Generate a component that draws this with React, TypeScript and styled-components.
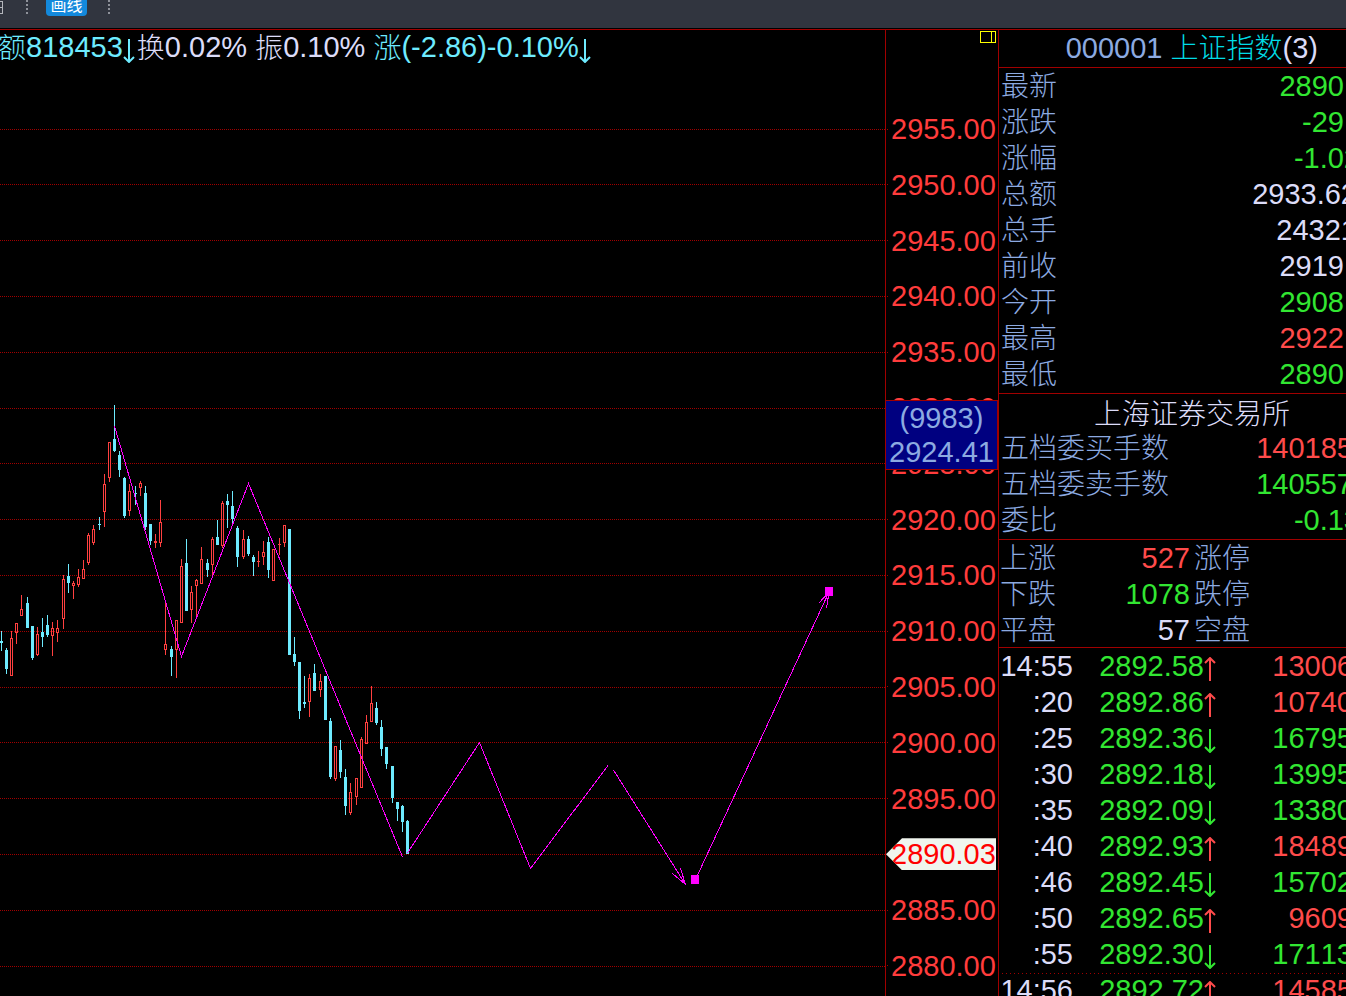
import React from "react";
import styled, { createGlobalStyle } from "styled-components";

const GlobalStyle = createGlobalStyle`
  * { box-sizing: border-box; }
  body {
    margin: 0;
    background: #000;
    color: #dcdcf8;
    font-family: "Liberation Sans", "Noto Sans CJK SC", sans-serif;
    font-size: 29px;
    font-kerning: none;
    line-height: 36px;
    overflow: hidden;
  }
`;

const tones = {
  up: "#ff4b4b",
  down: "#32e632",
  plain: "#dcdcf8",
  label: "#8caae1",
  cyan: "#6eebff",
  teal: "#00dce6",
};
type Tone = keyof typeof tones;

const MAGENTA = "#ff00ff";
const FRAME = "#a00000";

const Screen = styled.div`
  display: flex;
  flex-direction: column;
  height: 100vh;
  overflow: hidden;
`;

const Toolbar = styled.header`
  display: flex;
  flex: none;
  align-items: flex-start;
  height: 28px;
  background: #31353f;
  overflow: hidden;
`;

const ToolbarIcon = styled.svg`
  display: block;
  flex: none;
`;

const Separator = styled.span`
  flex: none;
  width: 2px;
  height: 14px;
  margin: 0 18px 0 21px;
  background: repeating-linear-gradient(to top, #8f929a 0 2px, transparent 2px 4px);
`;

const DrawButton = styled.button`
  flex: none;
  width: 41px;
  height: 26px;
  margin-top: -10px;
  padding: 0;
  border: 0;
  border-radius: 4px;
  background: #1389dc;
  color: #fff;
  font-family: "Noto Sans CJK SC", sans-serif;
  font-size: 16px;
  line-height: 28px;
  overflow: hidden;
`;

const Workspace = styled.main`
  display: flex;
  flex: 1;
  min-height: 0;
  margin-top: 1px;
  border-top: 1px solid ${FRAME};
`;

const ChartPane = styled.section`
  display: flex;
  flex-direction: column;
  flex: 1;
  min-width: 0;
  border-right: 1px solid ${FRAME};
`;

const InfoLine = styled.div`
  display: flex;
  flex: none;
  height: 36px;
  margin-left: -2px;
  line-height: 34px;
  white-space: pre;
`;

const Text = styled.span<{ $tone: Tone }>`
  color: ${(p) => tones[p.$tone]};
`;

const Han = styled.span<{ $tone?: Tone }>`
  color: ${(p) => (p.$tone ? tones[p.$tone] : "inherit")};
  font-family: "Noto Sans CJK SC", sans-serif;
  font-size: 28px;
  font-weight: 300;
  line-height: 32px;
`;

const ArrowMark = styled.svg<{ $tone: Tone }>`
  display: inline-block;
  flex: none;
  width: 12px;
  height: 24px;
  margin-top: 9px;
  fill: none;
  stroke: ${(p) => tones[p.$tone]};
  stroke-width: 2px;
  vertical-align: top;
`;

const InfoArrow = styled(ArrowMark)`
  margin-right: 2px;
`;

const Plot = styled.svg`
  display: block;
  flex: 1;
  width: 100%;
  min-height: 0;
`;

const Axis = styled.aside`
  position: relative;
  flex: none;
  width: 112px;
  padding-top: 84px;
`;

const PaneToggle = styled.button`
  position: absolute;
  top: 1px;
  right: 2px;
  display: block;
  width: 16px;
  height: 12px;
  padding: 0;
  border: 1px solid #ffff00;
  background: linear-gradient(to left, transparent 3px, #ffff00 3px 4px, transparent 4px);
`;

const Scale = styled.ol`
  display: flex;
  flex-direction: column;
  justify-content: space-between;
  height: 867px;
  margin: 0;
  padding: 0;
  list-style: none;
`;

const Level = styled.li`
  display: flex;
  align-items: center;
  height: 30px;
  color: #ff3c3c;
  line-height: 30px;

  &::before {
    content: "";
    width: 3px;
    height: 1px;
    margin-right: 2px;
    background: repeating-linear-gradient(to right, transparent 0 1px, ${FRAME} 1px 2px);
  }
`;

const LastPrice = styled.li`
  height: 32px;
  margin: -1px 2px -1px 0;
  padding-left: 5px;
  background: #f0f5ee;
  clip-path: polygon(0 50%, 16px 0, 100% 0, 100% 100%, 16px 100%);
  color: #ff0000;
  line-height: 32px;
`;

const Crosshair = styled.div`
  position: absolute;
  top: 370px;
  left: 0;
  width: 112px;
  height: 70px;
  border: 1px solid ${FRAME};
  border-left: 0;
  background: #000080;
  color: #8caae1;
  line-height: 34px;
  text-align: center;
`;

const Quote = styled.aside`
  flex: none;
  width: 348px;
  border-left: 1px solid ${FRAME};
  overflow: hidden;
`;

const QuoteTitle = styled.h1`
  display: flex;
  justify-content: flex-end;
  height: 38px;
  margin: 0;
  padding-right: 28px;
  border-bottom: 1px solid ${FRAME};
  font-size: 29px;
  font-weight: 400;
  white-space: pre;
`;

const Exchange = styled.h2`
  display: flex;
  align-items: center;
  justify-content: center;
  height: 36px;
  margin: 0;
  padding-left: 39px;
`;

const Group = styled.section`
  padding-bottom: 1px;
  border-bottom: 1px solid ${FRAME};
`;

const Row = styled.div`
  display: flex;
  justify-content: space-between;
  height: 36px;
  padding: 0 2px;
  white-space: nowrap;
`;

const Value = styled.span<{ $tone: Tone; $spill: number }>`
  margin-right: -${(p) => p.$spill}px;
  color: ${(p) => tones[p.$tone]};
`;

const Breadth = styled.div`
  display: grid;
  grid-template-columns: 60px 131px 1fr;
  height: 36px;
  padding-left: 1px;
`;

const Count = styled.span<{ $tone: Tone }>`
  padding-right: 1px;
  color: ${(p) => tones[p.$tone]};
  text-align: right;
`;

const BreadthLabel = styled(Han)`
  padding-left: 3px;
`;

const BreadthList = styled.section`
  height: 108px;
  border-bottom: 1px solid ${FRAME};
`;

const Ticks = styled.table`
  width: 100%;
  border-collapse: collapse;
  table-layout: fixed;
`;

const TickRow = styled.tr<{ $minute: boolean }>`
  height: 36px;
  background: ${(p) =>
    p.$minute
      ? `repeating-linear-gradient(to right, transparent 0 3px, ${FRAME} 3px 4px) 0 1px / 100% 1px no-repeat`
      : "none"};
`;

const Cell = styled.td<{ $tone: Tone; $width?: number }>`
  width: ${(p) => (p.$width ? `${p.$width}px` : "auto")};
  height: 36px;
  padding: 0;
  color: ${(p) => tones[p.$tone]};
  text-align: right;
  vertical-align: top;
  white-space: nowrap;
`;

const Volume = styled.span`
  margin-right: -7px;
`;

const levels = [
  "2955.00", "2950.00", "2945.00", "2940.00", "2935.00", "2930.00", "2925.00", "2920.00",
  "2915.00", "2910.00", "2905.00", "2900.00", "2895.00", "2890.03", "2885.00", "2880.00",
];
const gridY = [129, 184, 240, 296, 352, 408, 463, 519, 575, 631, 687, 742, 798, 854, 910, 966];

/* x of the wick, high, top of body, bottom of body, low, rising */
type Candle = [number, number, number, number, number, 0 | 1];
const candles: Candle[] = [
  [1, 631, 641, 643, 651, 0], [6, 648, 650, 669, 674, 0], [11, 631, 638, 676, 676, 1],
  [16, 623, 623, 633, 644, 1], [21, 595, 609, 616, 616, 1], [27, 597, 603, 628, 628, 0],
  [32, 626, 626, 658, 660, 0], [37, 627, 634, 655, 656, 1], [42, 618, 632, 637, 647, 0],
  [47, 615, 625, 635, 637, 0], [52, 622, 628, 636, 656, 1], [57, 620, 628, 633, 642, 1],
  [63, 575, 579, 619, 629, 1], [68, 564, 576, 583, 593, 0], [73, 581, 583, 586, 599, 1],
  [78, 569, 577, 585, 587, 1], [83, 560, 569, 579, 579, 1], [88, 533, 535, 563, 565, 1],
  [93, 525, 529, 543, 545, 1], [99, 517, 524, 525, 530, 0], [104, 474, 484, 512, 527, 1],
  [109, 442, 442, 478, 482, 1], [114, 405, 439, 451, 452, 0], [119, 451, 455, 470, 477, 0],
  [124, 477, 478, 516, 518, 0], [129, 484, 491, 511, 516, 1], [135, 486, 493, 494, 505, 0],
  [140, 481, 483, 488, 496, 1], [145, 486, 493, 527, 530, 0], [150, 524, 524, 541, 545, 0],
  [155, 534, 541, 543, 548, 1], [160, 500, 522, 543, 547, 1], [165, 600, 644, 650, 655, 1],
  [171, 646, 649, 657, 676, 0], [176, 620, 620, 650, 678, 1], [181, 559, 566, 623, 623, 1],
  [186, 539, 563, 611, 611, 0], [191, 586, 592, 610, 623, 1], [196, 579, 580, 586, 619, 1],
  [201, 547, 559, 584, 584, 1], [207, 559, 563, 570, 577, 0], [212, 537, 539, 565, 575, 1],
  [217, 520, 537, 545, 545, 0], [222, 501, 503, 546, 548, 1], [227, 494, 501, 505, 528, 0],
  [232, 491, 506, 519, 524, 0], [237, 526, 528, 557, 567, 0], [243, 530, 539, 557, 559, 1],
  [248, 536, 539, 554, 556, 0], [253, 555, 557, 562, 576, 0], [258, 551, 561, 562, 567, 1],
  [263, 541, 552, 557, 565, 1], [268, 537, 542, 570, 578, 0], [273, 549, 549, 581, 581, 1],
  [279, 538, 544, 545, 555, 1], [284, 525, 525, 543, 547, 1], [289, 529, 529, 655, 655, 0],
  [294, 637, 654, 662, 666, 0], [299, 662, 662, 711, 719, 0], [304, 676, 702, 704, 708, 0],
  [309, 674, 678, 702, 717, 1], [314, 664, 673, 691, 691, 0], [320, 674, 681, 690, 697, 1],
  [325, 676, 676, 720, 720, 0], [330, 718, 721, 777, 779, 0], [335, 746, 746, 779, 781, 1],
  [340, 740, 750, 772, 778, 0], [345, 769, 777, 806, 815, 0], [350, 783, 792, 813, 815, 1],
  [356, 778, 778, 797, 805, 1], [361, 737, 739, 788, 788, 1], [366, 715, 722, 744, 744, 1],
  [371, 686, 703, 722, 722, 1], [376, 702, 708, 723, 725, 0], [381, 720, 727, 749, 756, 0],
  [386, 747, 747, 764, 769, 0], [392, 766, 766, 798, 803, 0], [397, 802, 802, 809, 821, 0],
  [402, 805, 806, 822, 832, 0], [407, 820, 821, 854, 854, 0],
];

function candlePath([x, high, top, bottom, low, rising]: Candle) {
  const upper = `M${x} ${high}h1V${top}h-1z`;
  const lower = `M${x} ${bottom}h1V${low}h-1z`;
  const body = `M${x - 1} ${top}h3V${bottom}h-3z`;
  const hollow = rising && bottom - top > 2 ? `M${x} ${top + 1}V${bottom - 1}h1V${top + 1}z` : "";
  return upper + lower + body + hollow;
}

const strokes = [
  "M114.5 426L181.5 656.5L248.5 483.5L402.5 857",
  "M407.5 853L479.5 742.5L530.5 868.5L608 765.5",
  "M613.5 770L685.5 884.5M672.5 873.5L685.5 884.5L680.5 868.5",
  "M695.5 879.5L829 592M818.5 603.5L829 592L826.5 608.5",
];

type Line = [string, string, Tone, number];
const summary: Line[] = [
  ["最新", "2890", "down", 0],
  ["涨跌", "-29", "down", 0],
  ["涨幅", "-1.02", "down", 16],
  ["总额", "2933.62", "plain", 13],
  ["总手", "24321", "plain", 13],
  ["前收", "2919", "plain", 0],
  ["今开", "2908", "down", 0],
  ["最高", "2922", "up", 0],
  ["最低", "2890", "down", 0],
];
const orders: Line[] = [
  ["五档委买手数", "140185", "up", 9],
  ["五档委卖手数", "140557", "down", 9],
  ["委比", "-0.13", "down", 16],
];
const breadth: [string, string, Tone, string][] = [
  ["上涨", "527", "up", "涨停"],
  ["下跌", "1078", "down", "跌停"],
  ["平盘", "57", "plain", "空盘"],
];
const ticks: [string, string, "up" | "down", string][] = [
  ["14:55", "2892.58", "up", "13006"],
  [":20", "2892.86", "up", "10740"],
  [":25", "2892.36", "down", "16795"],
  [":30", "2892.18", "down", "13995"],
  [":35", "2892.09", "down", "13380"],
  [":40", "2892.93", "up", "18489"],
  [":46", "2892.45", "down", "15702"],
  [":50", "2892.65", "up", "9609"],
  [":55", "2892.30", "down", "17113"],
  ["14:56", "2892.72", "up", "14585"],
];

const UP_ARROW = "M6 24V2M1 6L6 1L11 6";
const DOWN_ARROW = "M6 0V22M1 18L6 23L11 18";

function Chart() {
  return (
    <Plot role="img" aria-label="上证指数" shapeRendering="crispEdges">
      <g transform="translate(0 -66)">
        {gridY.map((y) => (
          <line key={y} x1="0" x2="100%" y1={y + 0.5} y2={y + 0.5} stroke={FRAME} strokeDasharray="1 1" />
        ))}
        {candles.map((c) => (
          <path key={c[0]} d={candlePath(c)} fill={c[5] ? "#ff4040" : "#6eebff"} fillRule="evenodd" />
        ))}
        {strokes.map((d) => (
          <path key={d} d={d} fill="none" stroke={MAGENTA} />
        ))}
        <rect x="691" y="875" width="8" height="9" fill={MAGENTA} />
        <rect x="825" y="587" width="8" height="9" fill={MAGENTA} />
      </g>
    </Plot>
  );
}

function Rows({ lines }: { lines: Line[] }) {
  return (
    <>
      {lines.map(([label, value, tone, spill]) => (
        <Row key={label}>
          <Han $tone="label">{label}</Han>
          <Value $tone={tone} $spill={spill}>{value}</Value>
        </Row>
      ))}
    </>
  );
}

export default function App() {
  return (
    <Screen>
      <GlobalStyle />
      <Toolbar>
        <ToolbarIcon width="5" height="14" viewBox="0 0 5 14" fill="none" stroke="#b4b6bc" shapeRendering="crispEdges" aria-hidden="true">
          <path d="M0 1.5h2.5v12H0M0 7.5h2" />
        </ToolbarIcon>
        <Separator />
        <DrawButton type="button">画线</DrawButton>
        <Separator />
      </Toolbar>
      <Workspace>
        <ChartPane>
          <InfoLine>
            <Han $tone="cyan">额</Han>
            <Text $tone="cyan">818453</Text>
            <InfoArrow $tone="cyan" viewBox="0 0 12 24" role="img" aria-label="下跌">
              <path d={DOWN_ARROW} />
            </InfoArrow>
            <Han>换</Han>
            <Text $tone="plain">0.02% </Text>
            <Han>振</Han>
            <Text $tone="plain">0.10% </Text>
            <Han $tone="cyan">涨</Han>
            <Text $tone="cyan">(-2.86)-0.10%</Text>
            <InfoArrow $tone="cyan" viewBox="0 0 12 24" role="img" aria-label="下跌">
              <path d={DOWN_ARROW} />
            </InfoArrow>
          </InfoLine>
          <Chart />
        </ChartPane>
        <Axis>
          <PaneToggle type="button" aria-label="侧栏" />
          <Scale>
            {levels.map((level) =>
              level === "2890.03" ? (
                <LastPrice key={level}>{level}</LastPrice>
              ) : (
                <Level key={level}>{level}</Level>
              )
            )}
          </Scale>
          <Crosshair>
            <div>(9983)</div>
            <div>2924.41</div>
          </Crosshair>
        </Axis>
        <Quote>
          <QuoteTitle>
            <Text $tone="label">000001 </Text>
            <Han $tone="teal">上证指数</Han>
            <Text $tone="plain">(3)</Text>
          </QuoteTitle>
          <Group>
            <Rows lines={summary} />
          </Group>
          <Group>
            <Exchange>
              <Han>上海证券交易所</Han>
            </Exchange>
            <Rows lines={orders} />
          </Group>
          <BreadthList>
            {breadth.map(([label, count, tone, limit]) => (
              <Breadth key={label}>
                <Han $tone="label">{label}</Han>
                <Count $tone={tone}>{count}</Count>
                <BreadthLabel $tone="label">{limit}</BreadthLabel>
              </Breadth>
            ))}
          </BreadthList>
          <Ticks>
            <tbody>
              {ticks.map(([time, price, direction, volume]) => (
                <TickRow key={time} $minute={time === "14:56"}>
                  <Cell $tone="plain" $width={74}>{time}</Cell>
                  <Cell $tone="down" $width={143}>
                    {price}
                    <ArrowMark
                      $tone={direction}
                      viewBox="0 0 12 24"
                      role="img"
                      aria-label={direction === "up" ? "上涨" : "下跌"}
                    >
                      <path d={direction === "up" ? UP_ARROW : DOWN_ARROW} />
                    </ArrowMark>
                  </Cell>
                  <Cell $tone={direction}>
                    <Volume>{volume}</Volume>
                  </Cell>
                </TickRow>
              ))}
            </tbody>
          </Ticks>
        </Quote>
      </Workspace>
    </Screen>
  );
}
